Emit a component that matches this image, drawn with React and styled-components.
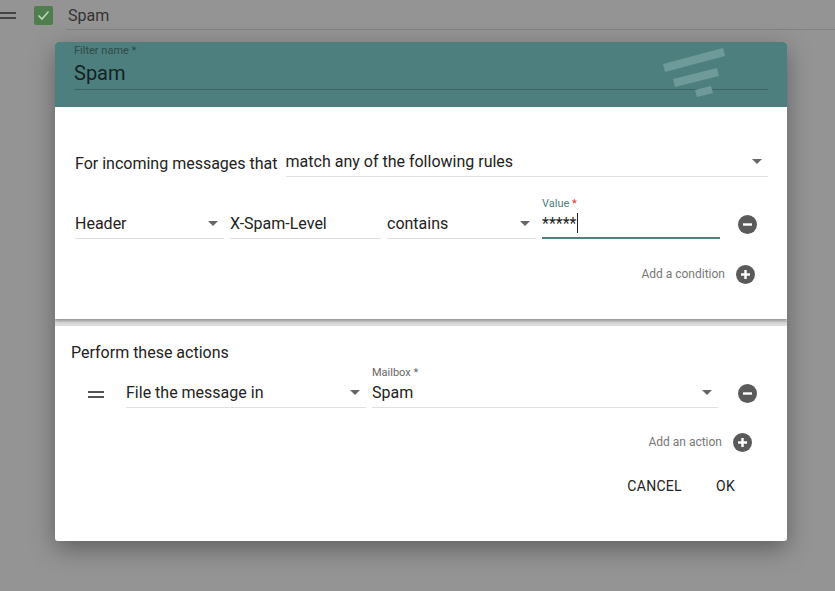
import React from 'react';
import styled, { createGlobalStyle } from 'styled-components';

const Global = createGlobalStyle`
  body { margin: 0; background: #949494; font-family: Roboto, "Noto Sans", sans-serif; }
`;

const Page = styled.div`
  width: 835px;
  height: 591px;
  position: relative;
  overflow: hidden;
`;

const BgRow = styled.div`
  display: flex;
  align-items: center;
  height: 31px;
  color: #333;
  font-size: 16px;
`;

const Handle = styled.div`
  width: 16px;
  margin: 0 18px 0 0;
  border-top: 2px solid #444;
  border-bottom: 2px solid #444;
  height: 3px;
`;

const Check = styled.div`
  width: 19px;
  height: 19px;
  background: #4f7e4c;
  border-radius: 2px;
  display: flex;
  align-items: center;
  justify-content: center;
  margin-right: 15px;
`;

const BgLine = styled.div`
  position: absolute;
  left: 66px;
  right: 0;
  top: 29px;
  border-top: 1px solid #838383;
`;

const Dialog = styled.div`
  position: absolute;
  left: 55px;
  top: 42px;
  width: 732px;
  height: 499px;
  background: #fff;
  border-radius: 3px;
  box-shadow: 0 8px 24px rgba(0,0,0,0.35);
  overflow: hidden;
  display: flex;
  flex-direction: column;
`;

const Header = styled.div`
  height: 63px;
  background: #4e7f7f;
  padding: 2px 19px 0 19px;
  position: relative;
`;

const SmallLabel = styled.div`
  font-size: 11px;
  color: ${p => p.$color || '#2e4a4a'};
  & b { color: ${p => p.$star || 'inherit'}; font-weight: 400; }
`;

const NameInput = styled.div`
  font-size: 20px;
  color: #142222;
  padding: 4px 0 4px 0;
  border-bottom: 1px solid #3c6464;
`;

const Section = styled.div`
  padding: ${p => p.$pad};
  height: ${p => p.$h}px;
  box-sizing: border-box;
  box-shadow: ${p => p.$shadow ? '0 2px 3px rgba(0,0,0,0.35)' : 'none'};
  position: relative;
  z-index: ${p => p.$shadow ? 1 : 0};
`;

const Divider = styled.div`
  height: 7px;
  background: #dcdcdc;
`;

const Row = styled.div`
  display: flex;
  align-items: flex-end;
  gap: ${p => p.$gap || 6}px;
  margin-top: ${p => p.$mt || 0}px;
`;

const Field = styled.div`
  width: ${p => p.$w}px;
  flex: ${p => p.$grow ? 1 : 'none'};
  display: flex;
  flex-direction: column;
`;

const Input = styled.div`
  display: flex;
  align-items: center;
  justify-content: space-between;
  height: 29px;
  font-size: 16px;
  color: #222;
  border-bottom: ${p => p.$active ? '2px solid #4e8080' : '1px solid #e0e0e0'};
  box-sizing: border-box;
`;

const Arrow = styled.span`
  width: 0; height: 0;
  border-left: 5px solid transparent;
  border-right: 5px solid transparent;
  border-top: 5px solid #666;
  margin-right: 6px;
`;

const Caret = styled.span`
  display: inline-block;
  width: 1px;
  height: 20px;
  background: #222;
  margin-left: 1px;
`;

const RoundBtn = styled.div`
  width: 19px;
  height: 19px;
  border-radius: 50%;
  background: #5a5a5a;
  display: flex;
  align-items: center;
  justify-content: center;
  flex: none;
`;

const AddRow = styled.div`
  display: flex;
  justify-content: flex-end;
  align-items: center;
  gap: 11px;
  font-size: 12px;
  color: #777;
  margin-top: ${p => p.$mt}px;
  padding-right: ${p => p.$pr}px;
`;

const Title = styled.div`
  font-size: 16px;
  color: #222;
`;

const Footer = styled.div`
  display: flex;
  justify-content: flex-end;
  gap: 34px;
  padding: 0 33px 0 0;
  margin-top: 26px;
`;

const TextBtn = styled.div`
  font-size: 14px;
  color: #222;
  letter-spacing: 0.3px;
`;

const Icon = ({ plus }) => (
  <RoundBtn>
    <svg width="11" height="11" viewBox="0 0 11 11">
      <rect x="1" y="4.3" width="9" height="2.4" fill="#fff" />
      {plus && <rect x="4.3" y="1" width="2.4" height="9" fill="#fff" />}
    </svg>
  </RoundBtn>
);

export default function App() {
  return (
    <Page>
      <Global />
      <BgRow>
        <Handle />
        <Check>
          <svg width="13" height="11" viewBox="0 0 13 11"><path d="M1.5 5.5l3.5 3.5 6.5-7.5" stroke="#b9d6b6" strokeWidth="1.6" fill="none" /></svg>
        </Check>
        Spam
      </BgRow>
      <BgLine />
      <Dialog>
        <Header>
          <SmallLabel>Filter name *</SmallLabel>
          <NameInput>Spam</NameInput>
          <svg style={{ position: 'absolute', right: 62, top: 4 }} width="64" height="52" viewBox="0 0 64 52">
            <polygon points="2,18 62,2 64,10 4,26" fill="#6e9a9a" />
            <polygon points="12,33 56,22 58,30 14,41" fill="#6e9a9a" />
            <polygon points="34,44 50,40 52,47 36,51" fill="#6e9a9a" />
          </svg>
        </Header>
        <Section $pad="41px 19px 0 20px" $h={213} $shadow>
          <Row $gap={8}>
            <Title style={{ paddingBottom: 4 }}>For incoming messages that</Title>
            <Field $grow>
              <Input>match any of the following rules<Arrow /></Input>
            </Field>
          </Row>
          <Row $mt={20}>
            <Field $w={149}><Input>Header<Arrow /></Input></Field>
            <Field $w={151}><Input>X-Spam-Level</Input></Field>
            <Field $w={149}><Input>contains<Arrow /></Input></Field>
            <Field $w={178}>
              <SmallLabel $color="#4e8080" $star="#d33">Value <b>*</b></SmallLabel>
              <Input $active>*****<Caret style={{ marginRight: 'auto' }} /></Input>
            </Field>
            <div style={{ marginLeft: 12, paddingBottom: 5 }}><Icon /></div>
          </Row>
          <AddRow $mt={26} $pr={13}>Add a condition <Icon plus /></AddRow>
        </Section>
        <Divider />
        <Section $pad="17px 19px 0 16px" $h={216}>
          <Title>Perform these actions</Title>
          <Row $mt={4} $gap={6}>
            <div style={{ width: 18, margin: '0 14px 10px 17px' }}><Handle style={{ margin: 0, borderColor: '#555' }} /></div>
            <Field $w={240}><Input>File the message in<Arrow /></Input></Field>
            <Field $w={346}>
              <SmallLabel $color="#666">Mailbox *</SmallLabel>
              <Input>Spam<Arrow /></Input>
            </Field>
            <div style={{ marginLeft: 14, paddingBottom: 5 }}><Icon /></div>
          </Row>
          <AddRow $mt={25} $pr={16}>Add an action <Icon plus /></AddRow>
          <Footer>
            <TextBtn>CANCEL</TextBtn>
            <TextBtn>OK</TextBtn>
          </Footer>
        </Section>
      </Dialog>
    </Page>
  );
}
